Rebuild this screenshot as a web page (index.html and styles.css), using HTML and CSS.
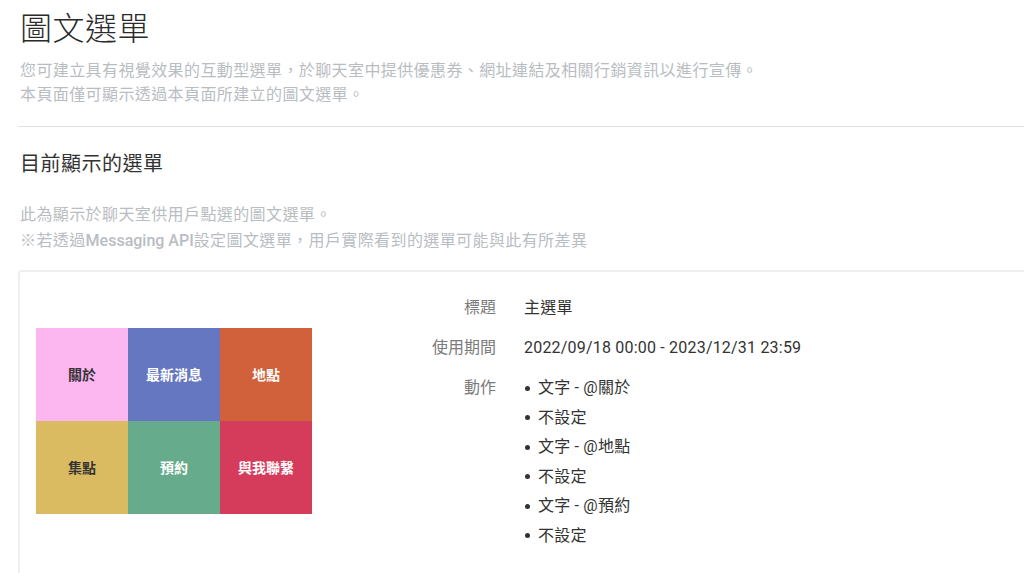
FILE: index.html
```html
<!DOCTYPE html>
<html lang="zh-Hant">
<head>
  <meta charset="UTF-8" />
  <title>圖文選單</title>
  <link rel="stylesheet" href="styles.css">
</head>
<body>
  <div class="page">
    <h1 class="page-title">圖文選單</h1>
    <p class="desc">
      您可建立具有視覺效果的互動型選單，於聊天室中提供優惠券、網址連結及相關行銷資訊以進行宣傳。<br>
      本頁面僅可顯示透過本頁面所建立的圖文選單。
    </p>
    <hr class="divider">

    <h2 class="section-title">目前顯示的選單</h2>
    <p class="desc sub">
      此為顯示於聊天室供用戶點選的圖文選單。<br>
      ※若透過<span class="latin">Messaging API</span>設定圖文選單，用戶實際看到的選單可能與此有所差異
    </p>

    <div class="card">
      <div class="menu-grid">
        <div class="cell pink">關於</div>
        <div class="cell blue">最新消息</div>
        <div class="cell orange">地點</div>
        <div class="cell yellow">集點</div>
        <div class="cell green">預約</div>
        <div class="cell red">與我聯繫</div>
      </div>

      <div class="info">
        <div class="label">標題</div>
        <div class="value">主選單</div>

        <div class="label">使用期間</div>
        <div class="value">2022/09/18 00:00 - 2023/12/31 23:59</div>

        <div class="label">動作</div>
        <ul class="value actions">
          <li>文字 - @關於</li>
          <li>不設定</li>
          <li>文字 - @地點</li>
          <li>不設定</li>
          <li>文字 - @預約</li>
          <li>不設定</li>
        </ul>
      </div>
    </div>
  </div>
</body>
</html>
```

FILE: styles.css
```css
body {
  font-family: Roboto, "Noto Sans CJK TC", sans-serif;
  background: #fff;
  color: #333;
  margin: 0;
  overflow: hidden;
}

.page {
  width: 1100px;
  padding: 9px 0 0 18px;
}

.page-title {
  font-size: 32px;
  font-weight: 300;
  line-height: 40px;
  letter-spacing: 0.5px;
  color: #2b2b2b;
  margin: 0 0 10px 2px;
}

.desc {
  font-size: 16px;
  line-height: 24px;
  letter-spacing: 0.4px;
  color: #b9bdc2;
  margin: 0 0 0 2px;
}

.latin {
  font-weight: 500;
  letter-spacing: 0;
}

.divider {
  border: 0;
  border-top: 1px solid #e3e3e3;
  margin: 19px 0 23px;
}

.section-title {
  font-size: 20px;
  font-weight: 400;
  line-height: 28px;
  letter-spacing: 0.5px;
  color: #333;
  margin: 0 0 24px 2px;
}

.desc.sub {
  line-height: 26px;
  margin-bottom: 16px;
}

.card {
  display: flex;
  align-items: center;
  border: 2px solid #efefef;
  border-radius: 4px;
  padding: 21px 16px 40px;
}

.menu-grid {
  display: grid;
  grid-template-columns: repeat(3, 92px);
  grid-template-rows: 93px 93px;
  margin-top: -2px;
}

.cell {
  display: flex;
  align-items: center;
  justify-content: center;
  font-size: 14px;
  font-weight: bold;
  color: #fff;
}

.pink { background: #fcb6f0; color: #333; }
.blue { background: #6677c1; }
.orange { background: #d0613a; }
.yellow { background: #dabb62; color: #333; }
.green { background: #66ab8c; }
.red { background: #d53c5c; }

.info {
  display: grid;
  grid-template-columns: 160px auto;
  column-gap: 28px;
  row-gap: 10.5px;
  margin-left: 24px;
  font-size: 16px;
  line-height: 29.5px;
}

.label {
  text-align: right;
  color: #7b7b7b;
}

.value {
  color: #333;
  letter-spacing: 0.2px;
}

.actions {
  list-style: none;
  margin: 0;
  padding: 0;
}

.actions li {
  position: relative;
  padding-left: 14px;
}

.actions li::before {
  content: "";
  position: absolute;
  left: 1px;
  top: 12.5px;
  width: 5px;
  height: 5px;
  border-radius: 50%;
  background: #333;
}
```
